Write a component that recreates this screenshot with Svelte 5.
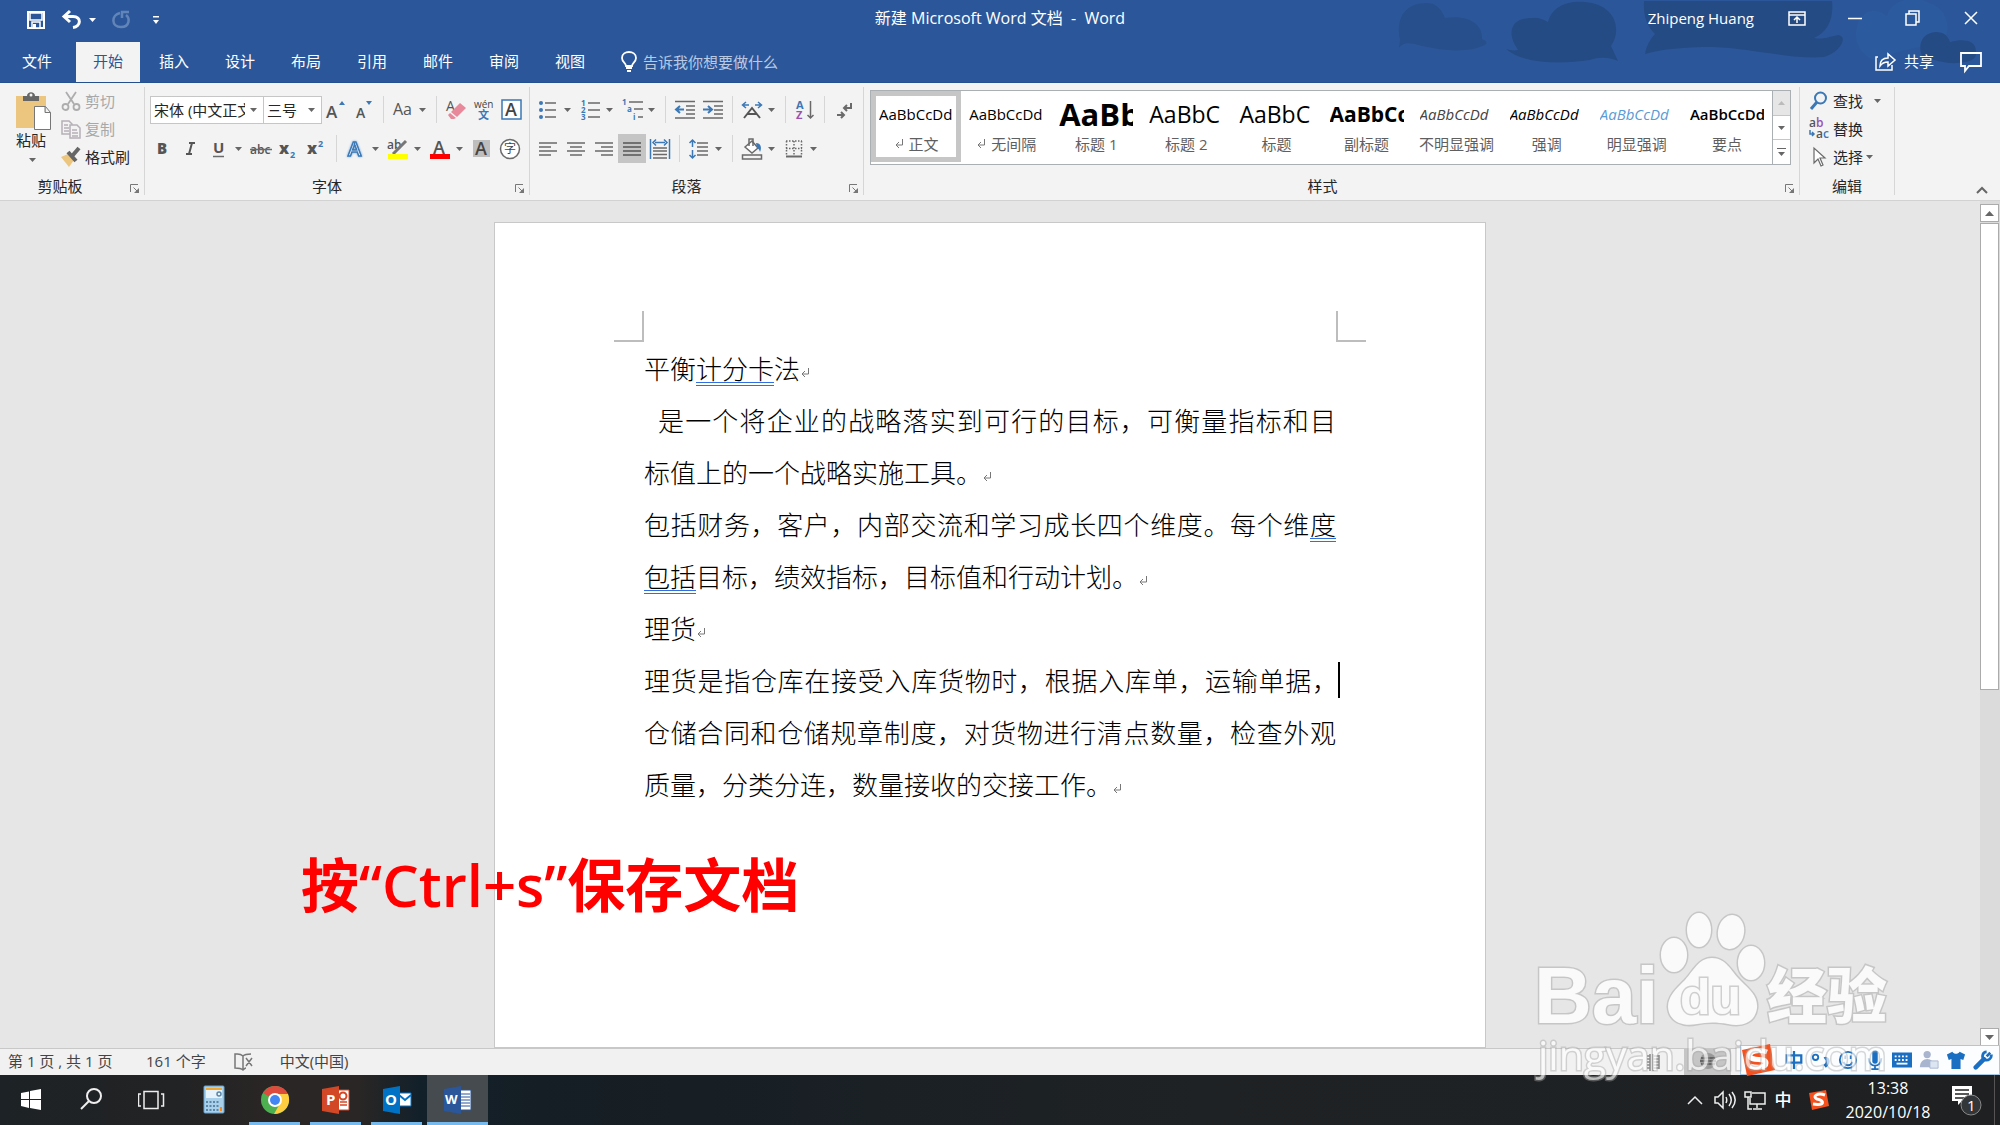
<script>
	const tabs = ['插入', '设计', '布局', '引用', '邮件', '审阅', '视图'];

	// toolbar rows: a plain name is a button, "name+" has a drop-down arrow, "|" is a separator
	const fontTop = ['grow', 'shrink', '|', 'case+', '|', 'eraser', 'pinyin', 'charborder'];
	const fontBottom = ['bold', 'italic', 'underline+', 'strike', 'sub', 'sup', '|', 'effects+', 'highlight+', 'color+', 'shade', 'enclose'];
	const paraTop = ['bullets+', 'numbers+', 'levels+', '|', 'outdent', 'indent', '|', 'scale+', '|', 'sort', '|', 'marks'];
	const paraBottom = ['left', 'center', 'right', 'justify', 'distribute', '|', 'spacing+', '|', 'bucket+', 'borders+'];

	const styles = [
		{ sample: 'AaBbCcDd', name: '正文', kind: 'normal', mark: true },
		{ sample: 'AaBbCcDd', name: '无间隔', kind: 'normal', mark: true },
		{ sample: 'AaBb', name: '标题 1', kind: 'h1' },
		{ sample: 'AaBbC', name: '标题 2', kind: 'h2' },
		{ sample: 'AaBbC', name: '标题', kind: 'h2' },
		{ sample: 'AaBbCc', name: '副标题', kind: 'subtitle' },
		{ sample: 'AaBbCcDd', name: '不明显强调', kind: 'soft' },
		{ sample: 'AaBbCcDd', name: '强调', kind: 'em' },
		{ sample: 'AaBbCcDd', name: '明显强调', kind: 'blue' },
		{ sample: 'AaBbCcDd', name: '要点', kind: 'strong' }
	];

	const apps = ['start', 'search', 'taskview', 'calc', 'chrome', 'ppt', 'outlook', 'word'];
	const running = ['chrome', 'ppt', 'outlook', 'word'];
	const ime = ['zh', 'comma', 'smile', 'mic', 'keyboard', 'person', 'shirt', 'wrench'];
</script>

{#snippet caret()}
	<svg class="caret" viewBox="0 0 7 4" width="7" height="4"><path d="M0 0h7L3.500 4z" fill="currentColor" /></svg>
{/snippet}

{#snippet icon(name)}
	<svg class="icon" viewBox="0 0 22 22" width="22" height="22" fill="none" stroke="#6a6a6a" stroke-width="1.500">
		{#if name === 'grow'}
			<text x="1" y="19" font-size="17" fill="#555" stroke="none" font-weight="600">A</text>
			<path d="M14 6l3-4 3 4z" fill="#3b78b5" stroke="none" />
		{:else if name === 'shrink'}
			<text x="3" y="19" font-size="14" fill="#555" stroke="none" font-weight="600">A</text>
			<path d="M13 2h6l-3 4z" fill="#3b78b5" stroke="none" />
		{:else if name === 'case'}
			<text x="1" y="16" font-size="16" fill="#555" stroke="none">Aa</text>
		{:else if name === 'eraser'}
			<text x="1" y="12" font-size="14" fill="#555" stroke="none">A</text>
			<path d="M15 4l6 5-9 9-6-5z" fill="#e8899b" stroke="none" />
			<path d="M5 14l6 5-2 1H6l-3-4z" fill="#e8899b" stroke="none" />
		{:else if name === 'pinyin'}
			<text x="1" y="9" font-size="10" fill="#444" stroke="none">wén</text>
			<text x="5" y="20" font-size="11" fill="#3b78b5" stroke="none" font-weight="700">文</text>
		{:else if name === 'charborder'}
			<rect x="1" y="1" width="19" height="19" stroke="#3b78b5" fill="#fff" />
			<text x="4" y="17" font-size="18" fill="#444" stroke="none" font-weight="600">A</text>
		{:else if name === 'bold'}
			<text x="5" y="16" font-size="15" fill="#555" stroke="none" font-weight="800">B</text>
		{:else if name === 'italic'}
			<path d="M9 5h6M6 16h6M12 5l-3 11" stroke="#555" stroke-width="2" />
		{:else if name === 'underline'}
			<text x="5" y="15" font-size="15" fill="#555" stroke="none" font-weight="700">U</text>
			<path d="M5 18.500h11" />
		{:else if name === 'strike'}
			<text x="0" y="16" font-size="12" fill="#555" stroke="none" font-weight="600">abc</text>
			<path d="M0 11.500h22" />
		{:else if name === 'sub' || name === 'sup'}
			<text x="1" y="16" font-size="16" fill="#555" stroke="none" font-weight="800">x</text>
			<text x="12" y={name === 'sub' ? 20 : 9} font-size="9" fill="#3b78b5" stroke="none" font-weight="700">2</text>
		{:else if name === 'effects'}
			<text x="3" y="18" font-size="20" fill="#fff" stroke="#3b78b5" font-weight="600" class="glow">A</text>
		{:else if name === 'highlight'}
			<text x="0" y="11" font-size="12" fill="#555" stroke="none" font-weight="600">ab</text>
			<path d="M19 3L8 14l-2 2" stroke="#777" stroke-width="3" />
			<path d="M1 18.500h20" stroke="#ff0" stroke-width="5" />
		{:else if name === 'color'}
			<text x="4" y="16" font-size="18" fill="#555" stroke="none" font-weight="600">A</text>
			<path d="M1 18.500h20" stroke="#f00" stroke-width="5" />
		{:else if name === 'shade'}
			<path d="M2 2h17v17H2z" fill="#bebebe" stroke="none" />
			<text x="4" y="17" font-size="18" fill="#444" stroke="none" font-weight="600">A</text>
		{:else if name === 'enclose'}
			<circle cx="11" cy="11" r="9.500" fill="#fff" />
			<text x="5" y="15" font-size="12" fill="#444" stroke="none">字</text>
		{:else if name === 'bullets'}
			<path d="M8 4h11M8 11h11M8 18h11" />
			<g fill="#3b78b5" stroke="none"><circle cx="4" cy="4" r="2" /><circle cx="4" cy="11" r="2" /><circle cx="4" cy="18" r="2" /></g>
		{:else if name === 'numbers'}
			<path d="M9 4h12M9 11h12M9 18h12" />
			<g font-size="8" fill="#3b78b5" stroke="none" font-weight="700"><text x="2" y="7">1</text><text x="2" y="14">2</text><text x="2" y="21">3</text></g>
		{:else if name === 'levels'}
			<path d="M8 3h14M13 10h9M17 18h5" />
			<g font-size="8" fill="#3b78b5" stroke="none" font-weight="700"><text x="1" y="6">1</text><text x="6" y="13">a</text><text x="12" y="21">i</text></g>
		{:else if name === 'outdent' || name === 'indent'}
			<path d="M1 2.500h20M12 7h9M12 11h9M12 15h9M1 19h20" />
			{#if name === 'outdent'}
				<path d="M10 10.500H3M6 7l-4 3.500L6 14" stroke="#3b78b5" stroke-width="2" />
			{:else}
				<path d="M1 10.500h8M6 7l4 3.500L6 14" stroke="#3b78b5" stroke-width="2" />
			{/if}
		{:else if name === 'scale'}
			<path d="M3 19L11 9l8 10M6 15h10" stroke="#555" stroke-width="2" />
			<path d="M8 6H2m3-3L1.500 6 5 9M14 6h6m-3-3l3.500 3L17 9" stroke="#3b78b5" />
		{:else if name === 'sort'}
			<text x="2" y="10" font-size="11" fill="#3b78b5" stroke="none" font-weight="700">A</text>
			<text x="2" y="20" font-size="11" fill="#9a50b0" stroke="none" font-weight="700">Z</text>
			<path d="M16.500 2v17m-3-3l3 3 3-3" />
		{:else if name === 'marks'}
			<path d="M18 4v5h-7m3-3l-3 3 3 3M4 16h7m-3-3l3 3-3 3" stroke-width="2" />
		{:else if name === 'left'}
			<path d="M2 5h18M2 9h12M2 13h18M2 17h12" />
		{:else if name === 'center'}
			<path d="M2 5h18M5 9h12M2 13h18M5 17h12" />
		{:else if name === 'right'}
			<path d="M2 5h18M8 9h12M2 13h18M8 17h12" />
		{:else if name === 'justify'}
			<path d="M2 5h18M2 9h18M2 13h18M2 17h18" stroke="#555" />
		{:else if name === 'distribute'}
			<path d="M1.500 1v20M20.500 1v20M6 4.500h10M7 1.500l-3 3 3 3M15 1.500l3 3-3 3" stroke="#3b78b5" />
			<path d="M4 10h14M4 13h14M4 16.500h14M4 20h14" />
		{:else if name === 'spacing'}
			<path d="M9 5h11M9 9h11M9 13h11M9 17h11" />
			<path d="M4.500 2v7m-3-4l3-3 3 3M4.500 12v8m-3-3l3 3 3-3" stroke="#3b78b5" />
		{:else if name === 'bucket'}
			<path d="M4 9l7-6 6 7-6 5z" fill="#fff" />
			<path d="M8 8V1h4v7M1.500 17h19v4h-19z" />
			<path d="M15 5c5 0 6 5 4 9-1-3-2-4-3-4z" fill="#3b78b5" stroke="none" />
		{:else if name === 'borders'}
			<path d="M3 3h16M3 10.500h16M3.500 3v14M11 3v14M18.500 3v14" stroke-dasharray="1.500 1.500" />
			<path d="M3 18.500h16" stroke-width="2" />
		{:else if name === 'cut'}
			<g stroke="#adadad" stroke-width="1.800"><path d="M6 2l8 12M16 2L8 14" /><circle cx="5.500" cy="17" r="3" /><circle cx="16.500" cy="17" r="3" /></g>
		{:else if name === 'copy'}
			<g stroke="#b5b0b8" fill="#f3f3f3"><path d="M2 3h7l3 3v10H2zM4 7h4M4 10h5M4 13h5" /><path d="M10 7h7l3 3v10H10zM12 12h5M12 15h6M12 18h6" /></g>
		{:else if name === 'brush'}
			<path d="M1 11l7-3 6 6-5 7z" fill="#ecc57e" stroke="none" />
			<path d="M8 6l8 9M13 9l6-7" stroke="#666" stroke-width="4" />
		{:else if name === 'find'}
			<circle cx="12.500" cy="8" r="5.500" stroke="#3b78b5" stroke-width="2" />
			<path d="M9 12l-6 7" stroke="#3b78b5" stroke-width="3" />
		{:else if name === 'replace'}
			<g font-size="12" stroke="none" font-weight="600"><text x="1" y="9" fill="#555">a<tspan fill="#9a50b0">b</tspan></text><text x="8" y="20" fill="#555">a<tspan fill="#3b78b5">c</tspan></text></g>
			<path d="M2 12v4h4m-2-2l2 2-2 2" stroke="#3b78b5" />
		{:else if name === 'select'}
			<path d="M6 2v15l4-4 3 7 2-1-3-7h5z" fill="#fff" stroke-width="1.200" />
		{:else if name === 'save'}
			<path d="M3 3h16v16H3z" stroke="#fff" stroke-width="2" />
			<path d="M5 4h12v7H5zM7 13h8v6H7z" fill="#2b579a" stroke="#fff" />
			<path d="M8 15h3v4H8z" fill="#fff" stroke="none" />
		{:else if name === 'undo'}
			<path d="M9 2L3 7.500 9 13M3 7.500h9c9 0 8 10 0 11" stroke="#fff" stroke-width="3" />
		{:else if name === 'redo'}
			<path d="M10 4C1 6 1 18 11 18c9 0 9-9 5-12M12 9V3h7" stroke="#6285b9" stroke-width="2.500" />
		{:else if name === 'bulb'}
			<path d="M8 15c0-3-4-4-4-8 0-8 14-8 14 0 0 4-4 5-4 8zM8 17h6M9 20h4" stroke="#fff" stroke-width="1.800" />
		{:else if name === 'share'}
			<path d="M4 7H2v13h16v-5" stroke="#fff" />
			<path d="M6 16c0-6 3-8 8-8V4l7 6-7 6v-4c-4 0-6 1-8 4z" stroke="#fff" />
		{:else if name === 'comment'}
			<path d="M1 3h20v13H9l-4 5v-5H1z" stroke="#fff" stroke-width="1.800" />
		{:else if name === 'display'}
			<path d="M3 5h16v13H3zM3 8h16M11 16v-6m-3 3l3-3 3 3" stroke="#fff" />
		{:else if name === 'min'}
			<path d="M4 11.500h14" stroke="#fff" />
		{:else if name === 'restore'}
			<path d="M4 7h10v11H4zM7 7V4h10v11h-3" stroke="#fff" />
		{:else if name === 'close'}
			<path d="M5 5l12 12M17 5L5 17" stroke="#fff" />
		{:else if name === 'proof'}
			<path d="M11 5C8 2 5 3 3 3v14c4 0 6 0 8 2 1-1 2-2 3-2M11 5v14M11 5c2-2 5-2 8-2M14 7l6 8M20 7l-6 8" stroke="#777" />
		{:else if name === 'reading'}
			<path d="M8 3v17M11 3v17M5 5h3M5 8h3M5 11h3M5 14h3M5 17h3M11 5h6M11 8h6M11 11h6M11 14h6M11 17h6M17 4v14" stroke="#888" />
		{:else if name === 'web'}
			<circle cx="11" cy="10" r="8" fill="#999" stroke="none" />
			<path d="M4 7h14M3 10h16M4 13h14" stroke="#555" />
		{/if}
	</svg>
{/snippet}

{#snippet tools(list)}
	<div class="tools">
		{#each list as item}
			{#if item === '|'}
				<span class="sep"></span>
			{:else}
				<button class:pressed={item === 'justify'} aria-label={item.replace('+', '')}>
					<span class="face">{@render icon(item.replace('+', ''))}</span>
					{#if item.endsWith('+')}<span class="drop">{@render caret()}</span>{/if}
				</button>
			{/if}
		{/each}
	</div>
{/snippet}

{#snippet caption(text, launcher)}
	<footer class="caption">
		<span>{text}</span>
		{#if launcher}
			<button aria-label="更多{text}选项">
				<svg viewBox="0 0 10 10" width="10" height="10" fill="none" stroke="#777"><path d="M.500 8V.500H8M3.500 3.500l4 4" /><path d="M9 4v5H4z" fill="#777" stroke="none" /></svg>
			</button>
		{/if}
	</footer>
{/snippet}

{#snippet enter()}
	<svg class="enter" viewBox="0 0 10 12" width="10" height="12" fill="none" stroke="#777"><path d="M8.500 1v6H2M5 4L2 7l3 3" /></svg>
{/snippet}

<div class="window">
	<header class="top">
		<svg class="clouds" viewBox="0 0 640 64" width="640" height="64" fill="#254b84">
			<path d="M40 40C35 15 48 3 66 3c12 0 16 8 19 15 20-3 38 4 37 21 4 2 6 3 3 6-21 10-52 4-70-1-9-2-13 0-16 4z" opacity=".7" />
			<path d="M146 49c4 1 8 2 12 1-13-18-6-33 15-32 6-1 11 2 15 4 4-16 20-22 37-20 29 2 38 26 26 44l7 15c-10-4-19-4-28-1-32 5-68 3-84-11z" />
			<path d="M284 1h188c2 17-4 31-18 37 10 2 17-2 24-3 11 1 2 18-14 22-31 3-73-9-112-10-28 0-49 2-67 7 1-7 5-15 10-20-8-8-12-18-11-33z" />
			<path d="M499 20c11-14 20-9 28-4 4-15 23-21 40-14 20 6 24 25 18 36-20 12-55 10-63 24-20-3-32-20-23-42z" fill="#2c5a9f" />
			<path d="M563 58c-6-12-2-25 13-26 8 0 12 4 14 10 12-3 26-3 26 10 1 8-7 10-18 11-15 1-23-4-35-5z" />
		</svg>
		<div class="titlebar">
			<div class="quick">
				<button aria-label="保存">{@render icon('save')}</button>
				<button class="undo" aria-label="撤消">{@render icon('undo')}{@render caret()}</button>
				<button aria-label="重复">{@render icon('redo')}</button>
				<button aria-label="自定义快速访问工具栏"><svg viewBox="0 0 8 8" width="8" height="8" fill="#fff"><path d="M1 0h6v1.500H1zM1 4h6L4 8z" /></svg></button>
			</div>
			<h1>新建 Microsoft Word 文档 &nbsp;- &nbsp;Word</h1>
			<div class="account">
				<span>Zhipeng Huang</span>
				<div class="winbuttons">
					{#each ['display', 'min', 'restore', 'close'] as name}
						<button aria-label={name}>{@render icon(name)}</button>
					{/each}
				</div>
			</div>
		</div>
		<nav class="tabs">
			<button class="file">文件</button>
			<button class="active">开始</button>
			{#each tabs as tab}
				<button>{tab}</button>
			{/each}
			<label class="tell">
				{@render icon('bulb')}
				<input type="text" aria-label="操作说明搜索" placeholder="告诉我你想要做什么" />
			</label>
			<div class="sharing">
				<button>{@render icon('share')}共享</button>
				<button aria-label="批注">{@render icon('comment')}</button>
			</div>
		</nav>
	</header>

	<section class="ribbon">
		<div class="group clipboard">
			<div class="body">
				<button class="paste">
					<svg viewBox="0 0 36 38" width="36" height="38" fill="none">
						<path d="M0 4h30v32H0z" fill="#ecc57e" />
						<path d="M7 9V4h4c0-5 8-5 8 0h4v5z" fill="#666" />
						<circle cx="15" cy="3" r="1.500" fill="#f3f3f3" />
						<path d="M18.500 14.500h11l5 6v17h-16zM29 14.500v6h5.500" fill="#fff" stroke="#777" />
					</svg>
					<span>粘贴</span>
					{@render caret()}
				</button>
				<div class="stack">
					<button disabled>{@render icon('cut')}剪切</button>
					<button disabled>{@render icon('copy')}复制</button>
					<button>{@render icon('brush')}格式刷</button>
				</div>
			</div>
			{@render caption('剪贴板', true)}
		</div>

		<div class="group font">
			<div class="rows">
				<div class="row fonts">
					<label class="combo name"><select aria-label="字体"><option>宋体 (中文正文)</option></select>{@render caret()}</label>
					<label class="combo size"><select aria-label="字号"><option>三号</option></select>{@render caret()}</label>
					{@render tools(fontTop)}
				</div>
				<div class="row">{@render tools(fontBottom)}</div>
			</div>
			{@render caption('字体', true)}
		</div>

		<div class="group para">
			<div class="rows">
				<div class="row">{@render tools(paraTop)}</div>
				<div class="row">{@render tools(paraBottom)}</div>
			</div>
			{@render caption('段落', true)}
		</div>

		<div class="group styles">
			<div class="gallery">
				{#each styles as style, i}
					<button class="style" class:chosen={i === 0}>
						<span class="sample {style.kind}">{style.sample}</span>
						<span class="label">{#if style.mark}{@render enter()}{/if}{style.name}</span>
					</button>
				{/each}
				<div class="scroller">
					<button disabled aria-label="上一行"><svg viewBox="0 0 7 4" width="7" height="4"><path d="M0 4h7L3.500 0z" fill="#bbb" /></svg></button>
					<button aria-label="下一行">{@render caret()}</button>
					<button aria-label="其他"><svg viewBox="0 0 9 8" width="9" height="8" fill="#666"><path d="M0 0h9v1H0zM1 4h7L4.500 8z" /></svg></button>
				</div>
			</div>
			{@render caption('样式', true)}
		</div>

		<div class="group edit">
			<div class="stack">
				<button>{@render icon('find')}查找 <span class="wide">{@render caret()}</span></button>
				<button>{@render icon('replace')}替换</button>
				<button>{@render icon('select')}选择 {@render caret()}</button>
			</div>
			{@render caption('编辑', false)}
		</div>
		<button class="collapse" aria-label="折叠功能区"><svg viewBox="0 0 12 8" width="12" height="8" fill="none" stroke="#666" stroke-width="2"><path d="M1 7l5-5 5 5" /></svg></button>
	</section>

	<main class="workspace">
		<div class="canvas">
			<article class="page">
				<span class="crop start"></span>
				<span class="crop end"></span>
				<p>平衡<u>计分卡</u>法{@render enter()}</p>
				<p class="full indent">是一个将企业的战略落实到可行的目标，可衡量指标和目</p>
				<p>标值上的一个战略实施工具。{@render enter()}</p>
				<p class="full">包括财务，客户，内部交流和学习成长四个维度。每个维<u>度</u></p>
				<p><u>包括</u>目标，绩效指标，目标值和行动计划。{@render enter()}</p>
				<p>理货{@render enter()}</p>
				<p class="full cursor">理货是指仓库在接受入库货物时，根据入库单，运输单据，</p>
				<p class="full">仓储合同和仓储规章制度，对货物进行清点数量，检查外观</p>
				<p>质量，分类分连，数量接收的交接工作。{@render enter()}</p>
			</article>
			<strong class="note">按“Ctrl+s”保存文档</strong>
		</div>
		<div class="scrollbar">
			<button aria-label="向上滚动"><svg viewBox="0 0 9 5" width="9" height="5"><path d="M0 5h9L4.500 0z" fill="#666" /></svg></button>
			<div class="track"><div class="thumb"></div></div>
			<button aria-label="向下滚动"><svg viewBox="0 0 9 5" width="9" height="5"><path d="M0 0h9L4.500 5z" fill="#666" /></svg></button>
		</div>
	</main>

	<footer class="status">
		<span class="pages">第 1 页 , 共 1 页</span>
		<span>161 个字</span>
		{@render icon('proof')}
		<span>中文(中国)</span>
		<div class="views">
			<button aria-label="阅读视图">{@render icon('reading')}</button>
			<button class="on" aria-label="页面视图">{@render icon('web')}</button>
		</div>
		<div class="ime">
			<svg class="sogou" viewBox="0 0 34 34" width="34" height="34">
				<path d="M1 7L29 1l5 26-28 6z" fill="#f4511e" />
				<path d="M26 9c-8-3-18-1-17 4 1 6 16 1 16 7 0 5-10 5-16 3" fill="none" stroke="#fff" stroke-width="5" />
			</svg>
			{#each ime as name}
				<button aria-label={name}>
					<svg viewBox="0 0 22 22" width="20" height="20" fill="none" stroke="#1b6fc2" stroke-width="2.500">
						{#if name === 'zh'}
							<path d="M3 6h16v8H3zM11 1v20" />
						{:else if name === 'comma'}
							<circle cx="5" cy="8" r="3" stroke-width="2" />
							<path d="M15 10c3-2 6 3 0 8" stroke-width="4" />
						{:else if name === 'smile'}
							<circle cx="11" cy="11" r="9" stroke-width="2" />
							<path d="M6 13c2 5 8 5 10 0M8 6v4M14 6v4" stroke-width="2" />
						{:else if name === 'mic'}
							<path d="M11 3v9" stroke-width="6" stroke-linecap="round" />
							<path d="M4 9c0 11 14 11 14 0M11 17v4M7 21h8" stroke-width="2" />
						{:else if name === 'keyboard'}
							<path d="M1 4h20v14H1z" fill="#1b6fc2" />
							<path d="M3 7h16M3 11h16" stroke="#fff" stroke-dasharray="2 2" stroke-width="2" />
							<path d="M5 15h12" stroke="#fff" stroke-width="2" />
						{:else if name === 'person'}
							<circle cx="9" cy="5" r="4" fill="#a9b5cf" stroke="none" />
							<path d="M1 19c0-12 16-12 16 0z" fill="#a9b5cf" stroke="none" />
							<path d="M12 12h9v8h-9z" fill="#dce5f2" stroke="#a9b5cf" stroke-width="1" />
						{:else if name === 'shirt'}
							<path d="M1 5l6-3c2 3 6 3 8 0l6 3-2 6-3-1v11H6V10l-3 1z" fill="#1b6fc2" stroke="none" />
						{:else}
							<path d="M3 19l9-9" stroke-width="5" stroke-linecap="round" />
							<path d="M19 3l-4 4M15 2c-5 0-6 7-2 9 4 1 8-2 7-6" stroke-width="3" />
						{/if}
					</svg>
				</button>
			{/each}
		</div>
	</footer>

	<footer class="taskbar">
		{#each apps as app}
			<button class="app" class:current={app === 'word'} class:running={running.includes(app)} aria-label={app}>
				<svg viewBox="0 0 30 30" width="30" height="30" fill="none" stroke="#eee" stroke-width="1.500">
					{#if app === 'start'}
						<path d="M5 8l8-1.500V14H5zM14 6l11-2v10H14zM5 15h8v8l-8-2zM14 15h11v10l-11-2z" fill="#fff" stroke="none" />
					{:else if app === 'search'}
						<circle cx="17" cy="11" r="7" stroke-width="2" />
						<path d="M12 16l-8 8" stroke-width="2" />
					{:else if app === 'taskview'}
						<path d="M6 6.500h14v17H6zM3 9H.500v12H3M23 9h2.500v12H23" />
					{:else if app === 'calc'}
						<rect x="5" y="1" width="20" height="27" rx="1" fill="#a9d0ea" stroke="#6aa3cc" stroke-width="1" />
						<path d="M7 4h16v9H7z" fill="#e6f3fb" stroke="none" />
						<path d="M7 4h16" stroke="#f0a830" stroke-width="2" />
						<path d="M7 17h14M7 21h14M7 25h14" stroke="#5b86a5" stroke-width="2" stroke-dasharray="2 1.500" />
						<path d="M22 22v4" stroke="#f58a1f" stroke-width="2" />
						<circle cx="20" cy="9" r="2" stroke="#5b86a5" />
					{:else if app === 'chrome'}
						<g stroke="none">
							<circle cx="15" cy="15" r="14" fill="#4caf50" />
							<path d="M15 15L3 8C9-2 23-1 28 9z" fill="#dd4b3e" />
							<path d="M28 9c4 10-3 20-14 20l8-14-5-6z" fill="#ffcd40" />
							<circle cx="15" cy="15" r="7" fill="#fff" />
							<circle cx="15" cy="15" r="5" fill="#4285f4" />
						</g>
					{:else if app === 'ppt'}
						<path d="M17 5h11v20H17z" fill="#fff" stroke="#d24726" stroke-width="1" />
						<path d="M19 17h7M19 20h7" stroke="#d24726" />
						<circle cx="22" cy="11" r="3.500" stroke="#d24726" stroke-width="2" />
						<path d="M1 4l17-3v28L1 26z" fill="#d24726" stroke="none" />
						<text x="5" y="20" font-size="15" font-weight="700" fill="#fff" stroke="none">P</text>
					{:else if app === 'outlook'}
						<path d="M16 8h13v13H16z" fill="#fff" stroke="#0072c6" stroke-width="1" />
						<path d="M17 10l6 5 6-5" stroke="#0072c6" stroke-width="2" />
						<path d="M1 4l17-3v28L1 26z" fill="#0072c6" stroke="none" />
						<text x="3" y="20" font-size="15" font-weight="700" fill="#fff" stroke="none">O</text>
					{:else}
						<path d="M17 5h11v20H17z" fill="#fff" stroke="#2b579a" stroke-width="1" />
						<path d="M18 9h9M18 12h9M18 15h9M18 18h9M18 21h9" stroke="#2b579a" stroke-width="1" />
						<path d="M1 4l17-3v28L1 26z" fill="#2b579a" stroke="none" />
						<text x="2" y="19" font-size="13" font-weight="700" fill="#fff" stroke="none">W</text>
					{/if}
				</svg>
			</button>
		{/each}
		<div class="tray">
			<button aria-label="显示隐藏的图标"><svg viewBox="0 0 22 22" width="22" height="22" fill="none" stroke="#eee" stroke-width="1.500"><path d="M4 15l7-7 7 7" /></svg></button>
			<button aria-label="音量"><svg viewBox="0 0 22 22" width="22" height="22" fill="none" stroke="#eee" stroke-width="1.500"><path d="M1 8h3l5-5v16l-5-5H1zM12 8c1 2 1 4 0 6M15 5c3 4 3 8 0 12M18 3c4 5 4 11 0 16" /></svg></button>
			<button aria-label="网络"><svg viewBox="0 0 22 22" width="22" height="22" fill="none" stroke="#eee" stroke-width="1.500"><path d="M8 4h13v11H6V9M1 3h6v5H1zM4 8v12h4M13 15v4M9 20h9" /></svg></button>
			<button class="lang">中</button>
			<button class="s" aria-label="搜狗输入法"><svg viewBox="0 0 22 22" width="22" height="22"><path d="M1 4l17-3 3 16-17 4z" fill="#f4511e" /><path d="M17 6C9 3 4 8 9 10c7 1 9 7-4 5" fill="none" stroke="#fff" stroke-width="3" /></svg></button>
			<time datetime="2020-10-18T13:38"><span>13:38</span><span>2020/10/18</span></time>
			<button class="bell" aria-label="通知">
				<svg viewBox="0 0 32 32" width="32" height="32"><path d="M2 2h20v15H12l-4 4v-4H2z" fill="#fff" /><path d="M5 6h14M5 10h14M5 14h9" stroke="#222" stroke-width="1.500" /><circle cx="21" cy="21" r="10" fill="#333638" stroke="#888" /><text x="17" y="27" font-size="15" fill="#fff">1</text></svg>
			</button>
		</div>
	</footer>

	<svg class="watermark" viewBox="0 0 380 180" width="380" height="180" fill="#fff" stroke="#a5a5a5" stroke-opacity=".6" paint-order="stroke" stroke-width="3">
		<g opacity=".8">
			<text x="2" y="118" class="bai">Bai</text>
			<ellipse cx="142" cy="50" rx="13" ry="17" />
			<ellipse cx="167" cy="25" rx="12" ry="17" />
			<ellipse cx="199" cy="27" rx="13" ry="17" transform="rotate(10 199 27)" />
			<ellipse cx="219" cy="58" rx="13" ry="17" />
			<path d="M180 53c14 0 19 13 28 22 10 10 18 16 17 28-2 15-15 19-29 16-11-2-21-2-31 0-14 3-28-2-29-17 0-11 8-18 17-27 9-10 14-22 27-22z" />
			<text x="148" y="109" class="du">du</text>
			<text x="235" y="113" class="jy">经验</text>
		</g>
		<text x="6" y="165" class="url" opacity=".7">jingyan.baidu.com</text>
	</svg>
</div>

<style>
	:global(body) {
		margin: 0;
	}
	.window {
		position: relative;
		display: flex;
		flex-direction: column;
		height: 100vh;
		overflow: hidden;
		font-family: "Open Sans", "Noto Sans CJK SC", sans-serif;
		font-size: 15px;
		line-height: 20px;
		color: #262626;
		background: #e6e6e6;
	}
	button, input, select {
		font: inherit;
		color: inherit;
		background: none;
		border: 0;
		padding: 0;
		margin: 0;
	}
	button {
		display: flex;
		align-items: center;
		justify-content: center;
		white-space: nowrap;
	}
	svg {
		flex: none;
	}
	.icon {
		overflow: visible;
	}
	.glow {
		filter: drop-shadow(0 0 1px #6fa8dc);
	}
	.caret {
		color: #666;
	}

	/* title bar and tabs */
	.top {
		position: relative;
		background: #2b579a;
		color: #fff;
	}
	.clouds {
		position: absolute;
		top: 0;
		right: 0;
	}
	.titlebar {
		position: relative;
		display: grid;
		grid-template-columns: 1fr auto 1fr;
		height: 42px;
	}
	.quick {
		display: flex;
		height: 40px;
		padding-left: 25px;
		gap: 14px;
		align-items: center;
	}
	.quick .caret {
		color: #fff;
	}
	.undo {
		gap: 6px;
	}
	.quick button:last-child {
		margin-left: 6px;
	}
	h1 {
		margin: 0;
		font-size: 16px;
		font-weight: 400;
		line-height: 36px;
	}
	.account {
		display: flex;
		justify-content: flex-end;
		align-items: center;
		gap: 14px;
		height: 36px;
	}
	.winbuttons {
		display: flex;
	}
	.winbuttons button {
		width: 58px;
		height: 36px;
	}
	.tabs {
		position: relative;
		display: flex;
		height: 40px;
		gap: 2px;
		border-bottom: 1px solid #24508f;
	}
	.tabs > button {
		width: 64px;
		padding-bottom: 2px;
	}
	.tabs > .file {
		width: 74px;
	}
	.tabs .active {
		background: #f3f3f3;
		color: #2b579a;
	}
	.tell {
		display: flex;
		align-items: center;
		gap: 3px;
		margin-left: 14px;
	}
	.tell input {
		width: 180px;
	}
	.tell input::placeholder {
		color: #b9cae4;
		opacity: 1;
	}
	.sharing {
		display: flex;
		gap: 26px;
		margin-left: auto;
		padding: 0 18px 2px 0;
	}
	.sharing button {
		gap: 8px;
	}

	/* ribbon */
	.ribbon {
		position: relative;
		display: flex;
		height: 117px;
		background: #f3f3f3;
		border-bottom: 1px solid #d2d2d2;
	}
	.group {
		box-sizing: border-box;
		display: flex;
		flex-direction: column;
		justify-content: space-between;
		margin: 4px 0 5px;
		border-right: 1px solid #d6d6d6;
	}
	.clipboard {
		width: 145px;
	}
	.font {
		width: 385px;
		padding-left: 4px;
	}
	.para {
		width: 334px;
		padding-left: 4px;
	}
	.styles {
		flex: 1;
		min-width: 0;
		padding-left: 6px;
	}
	.edit {
		width: 95px;
		margin-right: 105px;
	}
	.body {
		display: flex;
		padding-left: 16px;
	}
	.paste {
		flex-direction: column;
		justify-content: flex-start;
		align-items: flex-start;
		width: 44px;
		padding-top: 5px;
	}
	.paste .caret {
		margin: 8px 0 0 13px;
	}
	.stack {
		display: flex;
		flex-direction: column;
	}
	.stack button {
		justify-content: flex-start;
		gap: 3px;
		height: 28px;
	}
	.stack button:disabled {
		color: #a8a8a8;
	}
	.edit .stack {
		padding-left: 8px;
	}
	.wide {
		display: flex;
		padding-left: 8px;
	}
	.caption {
		display: flex;
		align-items: center;
		height: 18px;
	}
	.caption span {
		flex: 1;
		text-align: center;
	}
	.caption span:not(:last-child) {
		padding-right: 6px;
	}
	.caption button {
		width: 18px;
		padding-top: 6px;
	}
	.rows {
		display: flex;
		flex-direction: column;
		gap: 10px;
		padding-top: 8px;
	}
	.row, .tools {
		display: flex;
		align-items: center;
		height: 29px;
	}
	.fonts {
		padding-left: 1px;
	}
	.face {
		display: flex;
		align-items: center;
		justify-content: center;
		width: 28px;
		height: 29px;
	}
	.drop {
		display: flex;
		width: 14px;
		padding-left: 2px;
		box-sizing: border-box;
	}
	.pressed {
		background: #c5c5c5;
	}
	.sep {
		width: 1px;
		height: 27px;
		margin: 0 5px;
		background: #d6d6d6;
	}
	.combo {
		position: relative;
		box-sizing: border-box;
		height: 28px;
		background: #fff;
		border: 1px solid #c6c6c6;
	}
	.combo select {
		width: 100%;
		height: 26px;
		padding: 0 18px 0 3px;
		appearance: none;
	}
	.combo .caret {
		position: absolute;
		right: 6px;
		top: 11px;
	}
	.name {
		width: 114px;
	}
	.size {
		width: 59px;
		margin-left: -1px;
	}
	.gallery {
		display: flex;
		height: 73px;
		margin: 3px 8px 0 0;
		background: #fff;
		border: 1px solid #aaafb3;
	}
	.style {
		box-sizing: border-box;
		flex: 1;
		flex-direction: column;
		min-width: 0;
		height: 71px;
		padding: 0 4px;
		border: 5px solid transparent;
		overflow: hidden;
	}
	.chosen {
		border-color: #c6c6c6;
	}
	.sample {
		width: 74px;
		height: 34px;
		line-height: 34px;
		overflow: hidden;
		color: #000;
		text-align: left;
	}
	.h1 {
		font-size: 31px;
		font-weight: 700;
	}
	.h2 {
		font-size: 23px;
	}
	.subtitle {
		font-size: 21px;
		font-weight: 700;
	}
	.soft, .em, .blue {
		font-style: italic;
	}
	.soft {
		color: #444;
	}
	.blue {
		color: #5b9bd5;
	}
	.strong {
		font-weight: 600;
	}
	.label {
		display: flex;
		align-items: center;
		gap: 5px;
		height: 26px;
		color: #5f5f5f;
	}
	.scroller {
		display: flex;
		flex-direction: column;
		width: 17px;
		border-left: 1px solid #aaafb3;
	}
	.scroller button {
		flex: 1;
		border-top: 1px solid #c6c6c6;
	}
	.scroller button:disabled {
		background: #e6e6e6;
		border-top: 0;
	}
	.collapse {
		position: absolute;
		right: 12px;
		bottom: 6px;
	}

	/* document */
	.workspace {
		display: flex;
		flex: 1;
		min-height: 0;
	}
	.canvas {
		position: relative;
		flex: 1;
		overflow: hidden;
		padding-top: 21px;
	}
	.page {
		position: relative;
		box-sizing: border-box;
		width: 992px;
		min-height: 100%;
		margin: 0 auto;
		padding: 119px 149px 0;
		background: #fff;
		border: 1px solid #c8c8c8;
		font-family: "Noto Sans CJK SC", sans-serif;
		font-weight: 300;
		font-size: 26px;
		line-height: 52px;
		color: #000;
	}
	.page p {
		margin: 0;
		white-space: nowrap;
	}
	.page .full {
		white-space: normal;
		text-align: justify;
		text-align-last: justify;
	}
	.page .indent {
		padding-left: 14px;
	}
	.page .cursor {
		border-right: 2px solid #000;
		line-height: 36px;
		margin: 8px -4px 8px 0;
	}
	.page u {
		display: inline-block;
		text-decoration: none;
		border-bottom: 4px double #2f6fe0;
		line-height: 28px;
	}
	.crop {
		position: absolute;
		top: 88px;
		width: 28px;
		height: 29px;
		border-bottom: 2px solid #bdbdbd;
	}
	.crop.start {
		left: 119px;
		border-right: 2px solid #bdbdbd;
	}
	.crop.end {
		right: 119px;
		border-left: 2px solid #bdbdbd;
	}
	.note {
		position: absolute;
		left: 301px;
		top: 649px;
		font-size: 58px;
		line-height: 70px;
		font-weight: 600;
		color: #f00;
	}
	.scrollbar {
		display: flex;
		flex-direction: column;
		width: 20px;
		padding: 3px 0 2px;
		background: #dbdbdb;
	}
	.scrollbar button, .thumb {
		box-sizing: border-box;
		width: 19px;
		background: #fff;
		border: 1px solid #ababab;
	}
	.scrollbar button {
		height: 18px;
	}
	.track {
		flex: 1;
		padding-top: 1px;
	}
	.thumb {
		height: 58%;
	}

	/* status bar */
	.status {
		position: relative;
		display: flex;
		align-items: center;
		gap: 26px;
		height: 26px;
		padding-left: 8px;
		background: #f1f1f1;
		border-top: 1px solid #c8c8c8;
		color: #444;
	}
	.status > span {
		padding-bottom: 3px;
	}
	.pages {
		min-width: 112px;
	}
	.views {
		display: flex;
		gap: 20px;
		margin: 0 269px 0 auto;
	}
	.views .on {
		width: 47px;
		height: 26px;
		background: #c5c5c5;
	}
	.ime {
		position: absolute;
		right: 0;
		top: -4px;
		display: flex;
		box-sizing: border-box;
		height: 30px;
		padding-right: 3px;
		align-items: center;
		background: #fbfdff;
		border: 1px solid #a9c8e6;
	}
	.ime button {
		width: 27px;
	}
	.sogou {
		margin-right: 5px;
	}

	/* taskbar */
	.taskbar {
		display: flex;
		height: 50px;
		background: linear-gradient(90deg, #1d2226 0, #222324 9%, #2a2625 14%, #292625 18%, #12202a 21%, #151e24 27%, #1f2224 60%, #1e2022 100%);
		color: #fff;
	}
	.app {
		position: relative;
		width: 61px;
	}
	.current {
		background: #454b4e;
	}
	.running::after {
		content: "";
		position: absolute;
		left: 5px;
		right: 5px;
		bottom: 0;
		height: 3px;
		background: #76b9ed;
	}
	.current::after {
		left: 0;
		right: 0;
	}
	.tray {
		display: flex;
		align-items: center;
		margin-left: auto;
		padding-right: 12px;
		border-right: 1px solid #555;
		margin-right: 5px;
	}
	.tray > button {
		width: 30px;
		height: 50px;
	}
	.tray .lang {
		font-size: 17px;
		font-weight: 500;
		width: 26px;
	}
	.tray .s {
		width: 46px;
	}
	.tray .bell {
		width: 48px;
		justify-content: flex-end;
	}
	time {
		display: flex;
		flex-direction: column;
		align-items: center;
		width: 92px;
		font-size: 16px;
		line-height: 24px;
	}

	.watermark {
		position: absolute;
		right: 88px;
		bottom: 40px;
		pointer-events: none;
	}
	.bai {
		font: 700 80px "Liberation Sans", sans-serif;
	}
	.du {
		font: 700 50px "Liberation Sans", sans-serif;
	}
	.jy {
		font: 900 60px "Noto Sans CJK SC", sans-serif;
	}
	.url {
		font-size: 41px;
	}
</style>
